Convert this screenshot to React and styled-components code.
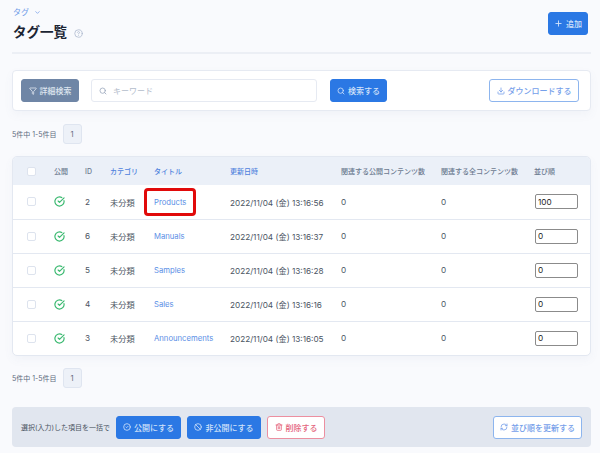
import React from 'react'
import styled, { createGlobalStyle } from 'styled-components'
import { Ban, ChevronDown, CircleCheck, CircleCheckBig, CircleHelp, Download, Filter, Plus, RefreshCw, Search, Trash2 } from 'lucide-react'

const GlobalStyle = createGlobalStyle`
  html, body { margin: 0; padding: 0; background: #f9fafd; }
  body { font-family: Inter, "Noto Sans CJK JP", sans-serif; color: #4b5563; }
  * { box-sizing: border-box; }
`

const Page = styled.div`
  width: 600px;
  height: 453px;
  overflow: hidden;
  padding: 8px 9px 0 12px;
`

const Header = styled.header`
  display: flex;
  justify-content: space-between;
  align-items: flex-start;
  width: 579px;
  height: 46px;
  padding-right: 3px;
  border-bottom: 2px solid #eceff5;
`

const Crumb = styled.div`
  display: flex;
  align-items: center;
  gap: 5px;
  height: 9px;
  padding-left: 1px;
  font-size: 8px;
  line-height: 9px;
  color: #6f9ae8;
`

const Heading = styled.h1`
  display: flex;
  align-items: center;
  gap: 7px;
  margin: 5px 0 0;
  padding-left: 1px;
  font-size: 13.5px;
  line-height: 20px;
  font-weight: 700;
  color: #1b2433;
  svg { color: #a9b6cc; margin-top: 2px; }
`

const HeaderAction = styled.div`
  margin-top: 4px;
`

const Button = styled.button`
  display: inline-flex;
  align-items: center;
  justify-content: center;
  gap: 3px;
  height: 23px;
  width: ${p => p.$w}px;
  padding: 0;
  border-radius: 3px;
  font: 500 8px Inter, "Noto Sans CJK JP", sans-serif;
  border: 1px solid ${p => p.$border};
  background: ${p => p.$bg};
  color: ${p => p.$color};
  flex-shrink: 0;
`

const Primary = props => <Button $bg="#2b78e4" $border="#2b78e4" $color="#d3e3fa" {...props} />
const Outline = props => <Button $bg="#fff" $border="#8db5ee" $color="#76a0ea" {...props} />

const SearchCard = styled.section`
  display: flex;
  align-items: center;
  width: 579px;
  height: 41px;
  margin-top: 16px;
  padding: 0 11px 0 8px;
  background: #fff;
  border: 1px solid #e6eaf2;
  border-radius: 4px;
  box-shadow: 0 4px 10px rgba(90, 110, 150, 0.05);
`

const InputBox = styled.div`
  display: flex;
  align-items: center;
  gap: 6px;
  width: 226px;
  height: 23px;
  margin: 0 13px 0 12px;
  padding-left: 7px;
  border: 1px solid #e6eaf2;
  border-radius: 3px;
  font-size: 8px;
  color: #b4bdcc;
  svg { color: #9aa7bd; }
`

const Spacer = styled.div`
  flex: 1;
`

const Pager = styled.div`
  display: flex;
  align-items: center;
  gap: 6px;
  margin-top: ${p => p.$top}px;
  height: 20px;
  font-size: 7px;
  color: #5f6b7d;
`

const PageNumber = styled.span`
  display: flex;
  align-items: center;
  justify-content: center;
  width: 19px;
  height: 20px;
  font-size: 7.5px;
  background: #edf1f8;
  border: 1px solid #dfe5f0;
  border-radius: 3px;
`

const TableCard = styled.div`
  width: 579px;
  margin-top: 12px;
  border: 1px solid #e3e8f1;
  border-radius: 5px;
  background: #fff;
  overflow: hidden;
  box-shadow: 0 4px 10px rgba(90, 110, 150, 0.05);
`

const Table = styled.table`
  width: 100%;
  border-collapse: collapse;
  table-layout: fixed;
`

const Th = styled.th`
  height: 28px;
  padding: 0;
  width: ${p => p.$w ? `${p.$w}px` : 'auto'};
  padding-left: ${p => p.$pad || 0}px;
  background: #ebf0f8;
  text-align: left;
  font-size: 7px;
  font-weight: 500;
  color: ${p => p.$link ? '#4f82dd' : '#6c7a90'};
`

const Row = styled.tr`
  height: 34px;
  border-top: 1px solid #e3e8f1;
  &:first-child { border-top: 0; }
`

const Td = styled.td`
  padding: 0;
  padding-left: ${p => p.$pad || 0}px;
  font-size: 8.2px;
  color: #4b5563;
  svg { display: block; }
`

const Check = styled.span`
  display: block;
  width: 9px;
  height: 9px;
  background: #fff;
  border: 1px solid #dde3ee;
  border-radius: 2px;
`

const TitleLink = styled.a`
  position: relative;
  color: #5b8fe6;
  font-size: 7.7px;
  ${p => p.$marked && `
    &::after {
      content: '';
      position: absolute;
      left: -10px;
      right: -10px;
      top: -10px;
      bottom: -9px;
      border: 3.5px solid #e10a0a;
      border-radius: 4px;
    }
  `}
`

const OrderInput = styled.input`
  display: block;
  width: 43px;
  height: 15px;
  margin-left: 1px;
  padding: 0 0 0 2px;
  font: 8.2px Inter, sans-serif;
  color: #222;
  background: #fff;
  border: 1px solid #8b8b8b;
  border-radius: 2px;
`

const BulkBar = styled.div`
  display: flex;
  align-items: center;
  width: 579px;
  height: 40px;
  margin-top: 19px;
  padding: 0 9px 0 9px;
  background: #e1e6ef;
  border-radius: 4px;
`

const BulkLabel = styled.span`
  width: 95px;
  font-size: 7px;
  color: #4b5563;
  white-space: nowrap;
`

const BulkButtons = styled.div`
  display: flex;
  gap: 6px;
`

const rows = [
  { id: 2, title: 'Products', date: '13:16:56', order: 100, marked: true },
  { id: 6, title: 'Manuals', date: '13:16:37', order: 0 },
  { id: 5, title: 'Samples', date: '13:16:28', order: 0 },
  { id: 4, title: 'Sales', date: '13:16:16', order: 0 },
  { id: 3, title: 'Announcements', date: '13:16:05', order: 0 },
]

const stroke = 2.4

export default function App() {
  return (
    <Page>
      <GlobalStyle />
      <Header>
        <div>
          <Crumb>タグ <ChevronDown size={7} strokeWidth={stroke} /></Crumb>
          <Heading>タグ一覧 <CircleHelp size={9} /></Heading>
        </div>
        <HeaderAction>
          <Primary $w={40}><Plus size={9} strokeWidth={stroke} /> 追加</Primary>
        </HeaderAction>
      </Header>

      <SearchCard>
        <Button $w={58} $bg="#6f86a6" $border="#6f86a6" $color="#dfe6f0"><Filter size={8} strokeWidth={stroke} /> 詳細検索</Button>
        <InputBox><Search size={8} strokeWidth={stroke} /> キーワード</InputBox>
        <Primary $w={57}><Search size={8} strokeWidth={stroke} /> 検索する</Primary>
        <Spacer />
        <Outline $w={90}><Download size={8} strokeWidth={stroke} /> ダウンロードする</Outline>
      </SearchCard>

      <Pager $top={13}>5件中 1-5件目 <PageNumber>1</PageNumber></Pager>

      <TableCard>
        <Table>
          <thead>
            <tr>
              <Th $w={41} $pad={14}><Check /></Th>
              <Th $w={31}>公開</Th>
              <Th $w={25}>ID</Th>
              <Th $w={44} $link>カテゴリ</Th>
              <Th $w={76} $link>タイトル</Th>
              <Th $w={111} $link>更新日時</Th>
              <Th $w={100}>関連する公開コンテンツ数</Th>
              <Th $w={93}>関連する全コンテンツ数</Th>
              <Th>並び順</Th>
            </tr>
          </thead>
          <tbody>
            {rows.map(row => (
              <Row key={row.id}>
                <Td $pad={14}><Check /></Td>
                <Td><CircleCheckBig size={11} strokeWidth={2.6} color="#3dba72" /></Td>
                <Td>{row.id}</Td>
                <Td>未分類</Td>
                <Td><TitleLink $marked={row.marked}>{row.title}</TitleLink></Td>
                <Td>2022/11/04 (金) {row.date}</Td>
                <Td>0</Td>
                <Td>0</Td>
                <Td><OrderInput defaultValue={row.order} /></Td>
              </Row>
            ))}
          </tbody>
        </Table>
      </TableCard>

      <Pager $top={12}>5件中 1-5件目 <PageNumber>1</PageNumber></Pager>

      <BulkBar>
        <BulkLabel>選択(入力)した項目を一括で</BulkLabel>
        <BulkButtons>
          <Primary $w={65}><CircleCheck size={8} strokeWidth={stroke} /> 公開にする</Primary>
          <Primary $w={74}><Ban size={8} strokeWidth={stroke} /> 非公開にする</Primary>
          <Button $w={58} $bg="#fff" $border="#ec8fa0" $color="#e4647c"><Trash2 size={8} strokeWidth={stroke} /> 削除する</Button>
        </BulkButtons>
        <Spacer />
        <Outline $w={89}><RefreshCw size={8} strokeWidth={stroke} /> 並び順を更新する</Outline>
      </BulkBar>
    </Page>
  )
}
